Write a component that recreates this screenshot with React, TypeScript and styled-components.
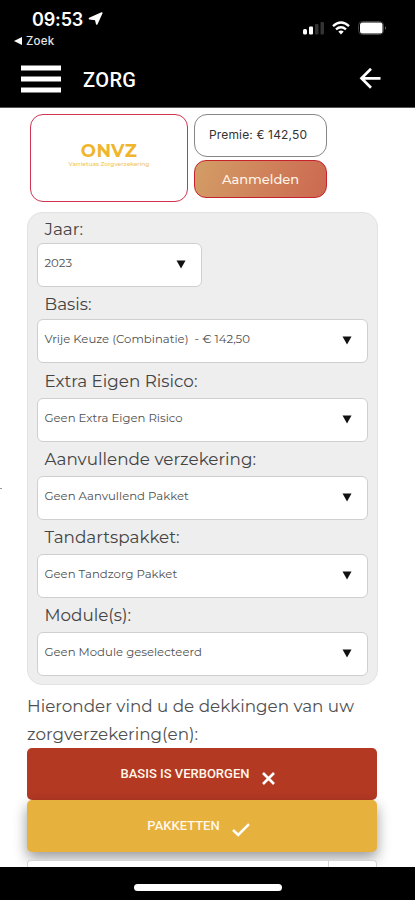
import React from "react";
import styled, { createGlobalStyle } from "styled-components";

const Global = createGlobalStyle`
  * { box-sizing: border-box; }
  body { margin: 0; background: #fff; overflow: hidden; font-family: Montserrat, Inter, sans-serif; }
`;

const Screen = styled.div`
  position: relative;
  width: 415px;
  height: 900px;
  display: flex;
  flex-direction: column;
  overflow: hidden;
  background: #fff;
`;

const EdgeMark = styled.div`
  position: absolute;
  left: 0;
  top: 488px;
  width: 2px;
  height: 1px;
  background: #999;
`;

const Header = styled.header`
  height: 108px;
  flex: none;
  background: #000;
  border-bottom: 1px solid #555;
  color: #fff;
`;

const StatusBar = styled.div`
  height: 34px;
  display: flex;
  align-items: flex-start;
  padding: 10px 28px 0 32px;
`;

const Clock = styled.span`
  font: 600 18px/20px Inter, sans-serif;
  width: 56px;
  letter-spacing: -0.15px;
`;

const StatusIcons = styled.div`
  margin: 10px 0 0 auto;
  display: flex;
`;

const BackToApp = styled.div`
  height: 14px;
  display: flex;
  align-items: center;
  gap: 4px;
  padding: 0 0 1px 14px;
  font: 500 11.5px/14px Inter, sans-serif;
  letter-spacing: 0.2px;
  color: #e4e4e4;
`;

const NavBar = styled.nav`
  height: 60px;
  display: flex;
  align-items: center;
  padding: 2px 34px 0 21px;
`;

const Title = styled.h1`
  margin: 2px auto 0 22px;
  font: 500 20px/24px Roboto, sans-serif;
  letter-spacing: 0.4px;
`;

const Main = styled.main`
  flex: 1;
  min-height: 0;
  overflow: hidden;
  padding: 6px 37px 0 27px;
`;

const Summary = styled.section`
  display: flex;
  gap: 6px;
  padding-left: 3px;
  height: 98px;
`;

const LogoCard = styled.div`
  width: 158px;
  height: 88px;
  border: 1.5px solid #cf3350;
  border-radius: 13px;
  display: flex;
  flex-direction: column;
  align-items: center;
  padding: 27px 0 0 0;
`;

const LogoName = styled.div`
  font: 700 18px/18px Montserrat, sans-serif;
  letter-spacing: 0.4px;
  color: #efb62d;
`;

const LogoTagline = styled.div`
  font: 500 5.9px/7px Montserrat, sans-serif;
  color: #efc257;
  white-space: nowrap;
`;

const Actions = styled.div`
  width: 133px;
  display: flex;
  flex-direction: column;
  gap: 3px;
`;

const Premium = styled.div`
  height: 43px;
  border: 1px solid #858585;
  border-radius: 13px;
  padding: 0 0 1px 14px;
  font: 400 12px/40px Inter, sans-serif;
  letter-spacing: 0.15px;
  color: #333;
`;

const Apply = styled.button`
  height: 38px;
  border: 1.5px solid #c5222b;
  border-radius: 12px;
  background: linear-gradient(110deg, #d39e66, #cc6850);
  color: #fff4e8;
  font: 500 13px/30px Montserrat, sans-serif;
  padding: 0 0 1px;
`;

const Panel = styled.section`
  width: 351px;
  height: 473px;
  border: 1px solid #e2e2e2;
  border-radius: 15px;
  background: #eee;
  padding: 0 9px;
`;

const Label = styled.div<{ $h: number; $drop: number }>`
  height: ${(p) => p.$h}px;
  display: flex;
  align-items: flex-end;
  padding: 0 0 ${(p) => p.$drop}px 7.5px;
  font-size: 16.8px;
  line-height: 22px;
  color: #444;
`;

const Select = styled.div<{ $w: number }>`
  width: ${(p) => p.$w}px;
  height: 44px;
  border: 1px solid #cfcfcf;
  border-radius: 6px;
  background: #fff;
  display: flex;
  justify-content: space-between;
  padding: 10.5px 15px 0 6.5px;
  font-size: 11.7px;
  line-height: 17px;
  color: #505050;
  white-space: pre;
`;

const Caret = styled.svg`
  width: 10px;
  height: 9px;
  margin-top: 5.5px;
`;

const Intro = styled.p`
  margin: 8px 0 0;
  height: 55px;
  font-size: 16.8px;
  line-height: 27.5px;
  color: #505050;
  white-space: nowrap;
`;

const Line = styled.span`
  display: block;
`;

const Toggle = styled.button<{ $bg: string; $raised?: boolean }>`
  display: flex;
  align-items: center;
  justify-content: center;
  width: 350px;
  height: 52px;
  border: 0;
  border-radius: 5px;
  padding: 0 7px 0 0;
  background: ${(p) => p.$bg};
  color: #fff7e9;
  font: 500 13px/20px Roboto, sans-serif;
  box-shadow: ${(p) => (p.$raised ? "0 6px 14px rgba(0,0,0,.4)" : "none")};
  svg { margin: 8px 0 0 12px; }
`;

const Table = styled.div`
  position: relative;
  width: 350px;
  height: 12px;
  margin-top: 8px;
  display: grid;
  grid-template-columns: 1fr 48px;
  border: 1px solid #d5d5d5;
  border-bottom: 0;
  border-radius: 4px 4px 0 0;
  background: #fff;
`;

const Cell = styled.div`
  & + & { border-left: 1px solid #d5d5d5; }
`;

const Footer = styled.footer`
  flex: none;
  height: 33px;
  background: #000;
  display: flex;
  justify-content: center;
  padding-top: 17px;
`;

const HomeIndicator = styled.div`
  width: 148px;
  height: 7px;
  border-radius: 4px;
  background: #fff;
`;

const fields = [
  { label: "Jaar:", value: "2023", h: 30, w: 165, drop: 3 },
  { label: "Basis:", value: "Vrije Keuze (Combinatie)  - € 142,50", h: 32, w: 331, drop: 4.5 },
  { label: "Extra Eigen Risico:", value: "Geen Extra Eigen Risico", h: 35, w: 331, drop: 6.5 },
  { label: "Aanvullende verzekering:", value: "Geen Aanvullend Pakket", h: 34, w: 331, drop: 6.5 },
  { label: "Tandartspakket:", value: "Geen Tandzorg Pakket", h: 34, w: 331, drop: 6.5 },
  { label: "Module(s):", value: "Geen Module geselecteerd", h: 34, w: 331, drop: 6.5 },
];

export default function App() {
  return (
    <Screen>
      <Global />
      <Header>
        <StatusBar>
          <Clock>09:53</Clock>
          <svg width="15" height="15" viewBox="0 0 15 15">
            <path d="M13.8 3 8.8 14 7.6 9.4 1.5 8.6Z" fill="#fff" stroke="#fff" strokeWidth="1.6" strokeLinejoin="round" />
          </svg>
          <StatusIcons>
            <svg width="84" height="16" viewBox="0 0 84 16">
              <rect x="0" y="9" width="4" height="5.5" rx="1.5" fill="#fff" />
              <rect x="6" y="6.5" width="4" height="8" rx="1" fill="#fff" />
              <rect x="12" y="4" width="3.5" height="10.5" rx="1" fill="#333" />
              <rect x="17.5" y="2" width="3.5" height="12.5" rx="1" fill="#333" />
              <g fill="none" stroke="#fff" strokeWidth="2.4">
                <path d="M30 6.2q8-7.2 16 0" />
                <path d="M33 9.3q5-4.2 10 0" />
              </g>
              <path d="M35.3 11.6q2.7-2.2 5.4 0L38 14.5Z" fill="#fff" />
              <rect x="55.5" y="1.5" width="25" height="13" rx="4" fill="none" stroke="#444" />
              <rect x="57" y="2.5" width="22.5" height="11" rx="2.5" fill="#fff" />
              <path d="M82 6v4q2-2 0-4" fill="#666" />
            </svg>
          </StatusIcons>
        </StatusBar>
        <BackToApp>
          <svg width="8" height="8" viewBox="0 0 8 8"><path d="M8 0v8L0 4Z" fill="#fff" /></svg>
          Zoek
        </BackToApp>
        <NavBar>
          <svg width="40" height="28" viewBox="0 0 40 28">
            <path d="M0 3h40M0 14h40M0 25h40" stroke="#fff" strokeWidth="5" />
          </svg>
          <Title>ZORG</Title>
          <svg width="22" height="22" viewBox="0 0 22 22">
            <path d="M12 .8 2.5 10.3l9.5 9.5M2.5 10.3H21.5" fill="none" stroke="#fff" strokeWidth="2.7" />
          </svg>
        </NavBar>
      </Header>
      <Main>
        <Summary>
          <LogoCard>
            <LogoName>ONVZ</LogoName>
            <LogoTagline>Varrietuas Zorgverzekering</LogoTagline>
          </LogoCard>
          <Actions>
            <Premium>Premie: € 142,50</Premium>
            <Apply>Aanmelden</Apply>
          </Actions>
        </Summary>
        <Panel>
          {fields.map((f) => (
            <React.Fragment key={f.label}>
              <Label $h={f.h} $drop={f.drop}>{f.label}</Label>
              <Select $w={f.w}>
                {f.value}
                <Caret viewBox="0 0 10 9"><path d="M.5.5h9L5 8.5Z" fill="#111" /></Caret>
              </Select>
            </React.Fragment>
          ))}
        </Panel>
        <Intro>
          <Line>Hieronder vind u de dekkingen van uw</Line>
          <Line>zorgverzekering(en):</Line>
        </Intro>
        <Toggle $bg="#b33923">
          BASIS IS VERBORGEN
          <svg width="15" height="15" viewBox="0 0 15 15"><path d="m2 2 11 11M13 2 2 13" stroke="#fff" strokeWidth="2.6" /></svg>
        </Toggle>
        <Toggle $bg="#e7b13d" $raised>
          PAKKETTEN
          <svg width="18" height="14" viewBox="0 0 18 14"><path d="m1 7 5.2 5L17 1.2" fill="none" stroke="#fff" strokeWidth="2.5" /></svg>
        </Toggle>
        <Table><Cell /><Cell /></Table>
      </Main>
      <EdgeMark />
      <Footer><HomeIndicator /></Footer>
    </Screen>
  );
}
